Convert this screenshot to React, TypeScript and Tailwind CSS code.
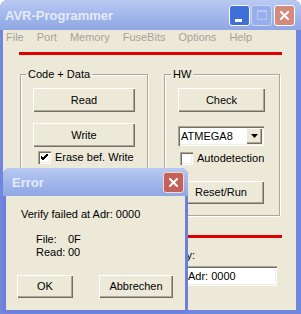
import React from "react"

const btn =
    "flex items-center justify-center bg-[#ECE9D8] text-black shadow-[inset_1px_1px_#ffffff,inset_-1px_-1px_#716F64,inset_-2px_-2px_#ACA899]"

function Check({ checked }: { checked?: boolean }) {
    return (
        <div className="flex h-[13px] w-[13px] items-center justify-center bg-white shadow-[inset_1px_1px_#ACA899,inset_2px_2px_#716F64,inset_-1px_-1px_#ffffff,inset_-2px_-2px_#F1EFE2]">
            {checked && (
                <svg width="7" height="7" viewBox="0 0 7 7">
                    <path d="M0 3 L2 5 L7 0 M0 4 L2 6 L7 1 M0 2 L2 4 L7 -1" stroke="#000" strokeWidth="1" fill="none" />
                </svg>
            )}
        </div>
    )
}

function CloseX({ size = 9 }: { size?: number }) {
    return (
        <svg width={size} height={size} viewBox="0 0 9 9">
            <path d="M1 1 L8 8 M8 1 L1 8" stroke="#fff" strokeWidth="2" strokeLinecap="square" />
        </svg>
    )
}

export default function App() {
    return (
        <div className="relative h-[314px] w-[301px] overflow-hidden bg-white font-['Liberation_Sans',Arial,sans-serif] text-[11px] leading-[13px] text-black">
            {/* main window */}
            <div className="flex h-full flex-col rounded-t-[8px] bg-[#7186DD]">
                <div className="flex h-[30px] items-center rounded-t-[8px] bg-gradient-to-b from-[#B9CAF2] via-[#A2B7EB] to-[#90A7E4] pl-[5px] pr-[6px]">
                    <span className="text-[13px] font-bold text-[#E4EBFA]">AVR-Programmer</span>
                    <div className="ml-auto flex gap-[1px]">
                        <div className="relative flex h-[21px] w-[21px] items-end rounded-[3px] border border-white bg-[#3F6FD9] pb-[3px] pl-[5px]">
                            <div className="h-[3px] w-[7px] bg-white" />
                        </div>
                        <div className="flex h-[21px] w-[21px] items-center justify-center rounded-[3px] border border-[#C9D6F6] bg-[#97AEEA]">
                            <div className="h-[10px] w-[10px] border border-t-2 border-[#B7C8F2]" />
                        </div>
                        <div className="ml-[1px] flex h-[21px] w-[21px] items-center justify-center rounded-[3px] border border-white bg-[#D58A7E]">
                            <CloseX />
                        </div>
                    </div>
                </div>
                <div className="mb-[4px] ml-[3px] mr-[5px] flex flex-1 flex-col bg-[#ECE9D8]">
                    <div className="flex h-[19px] gap-[13px] pl-[3px] pt-[1px] text-[#A5A398]">
                        <span>File</span>
                        <span>Port</span>
                        <span>Memory</span>
                        <span>FuseBits</span>
                        <span>Options</span>
                        <span>Help</span>
                    </div>
                    <div className="ml-[16px] mt-[3px] h-[3px] w-[263px] bg-[#E00000]" />
                    <div className="ml-[17px] mt-[13px] flex gap-[16px]">
                        <fieldset className="h-[148px] w-[127px] border border-[#ACA899] px-[12px] shadow-[inset_1px_1px_#ffffff,1px_1px_#ffffff]">
                            <legend className="-ml-[7px] bg-[#ECE9D8] px-[2px]">Code + Data</legend>
                            <div className={`${btn} mt-[7px] h-[24px] w-[102px]`}>Read</div>
                            <div className={`${btn} mt-[11px] h-[24px] w-[102px]`}>Write</div>
                            <div className="ml-[5px] mt-[4px] flex items-center gap-[4px]">
                                <Check checked />
                                <span>Erase bef. Write</span>
                            </div>
                        </fieldset>
                        <fieldset className="h-[148px] w-[116px] border border-[#ACA899] px-[13px] shadow-[inset_1px_1px_#ffffff,1px_1px_#ffffff]">
                            <legend className="-ml-[7px] bg-[#ECE9D8] px-[2px]">HW</legend>
                            <div className={`${btn} mt-[7px] h-[24px] w-[87px]`}>Check</div>
                            <div className="mt-[14px] flex h-[20px] w-[86px] items-center bg-white pl-[3px] pr-[2px] shadow-[inset_1px_1px_#ACA899,inset_2px_2px_#716F64,inset_-1px_-1px_#ffffff,inset_-2px_-2px_#F1EFE2]">
                                <span className="flex-1">ATMEGA8</span>
                                <div className={`${btn} h-[16px] w-[16px]`}>
                                    <svg width="7" height="4" viewBox="0 0 7 4">
                                        <path d="M0 0 H7 L3.5 4 Z" fill="#000" />
                                    </svg>
                                </div>
                            </div>
                            <div className="ml-[2px] mt-[6px] flex items-center gap-[4px]">
                                <Check />
                                <span>Autodetection</span>
                            </div>
                            <div className={`${btn} mt-[16px] h-[23px] w-[86px]`}>Reset/Run</div>
                        </fieldset>
                    </div>
                    <div className="ml-[16px] mt-[19px] h-[3px] w-[263px] bg-[#E00000]" />
                    <div className="mt-[11px] w-[192px] text-right">Memory:</div>
                    <div className="ml-[180px] mt-[4px] flex h-[20px] w-[94px] items-center bg-white pl-[5px] shadow-[inset_1px_1px_#ACA899,inset_2px_2px_#716F64,inset_-1px_-1px_#ffffff,inset_-2px_-2px_#F1EFE2]">
                        Adr: 0000
                    </div>
                </div>
            </div>

            {/* error dialog */}
            <div className="absolute left-[3px] top-[168px] flex h-[145px] w-[185px] flex-col rounded-t-[7px] bg-[#6C80DB]">
                <div className="flex h-[28px] items-center rounded-t-[7px] bg-gradient-to-b from-[#B9CAF2] via-[#A2B7EB] to-[#90A7E4] pl-[9px] pr-[4px]">
                    <span className="text-[13px] font-bold text-[#E4EBFA]">Error</span>
                    <div className="ml-auto flex h-[21px] w-[21px] items-center justify-center rounded-[3px] border border-[#F2D8D4] bg-[#C4625A]">
                        <CloseX />
                    </div>
                </div>
                <div className="mx-[3px] mb-[3px] flex flex-1 flex-col bg-[#ECE9D8] pl-[15px] pt-[12px]">
                    <div>Verify failed at Adr: 0000</div>
                    <div className="ml-[15px] mt-[12px] grid grid-cols-[32px_auto]">
                        <span>File:</span>
                        <span>0F</span>
                        <span>Read:</span>
                        <span>00</span>
                    </div>
                    <div className="-ml-[4px] mt-[16px] flex gap-[26px]">
                        <div className={`${btn} h-[23px] w-[56px]`}>OK</div>
                        <div className={`${btn} h-[23px] w-[74px]`}>Abbrechen</div>
                    </div>
                </div>
            </div>
        </div>
    )
}
